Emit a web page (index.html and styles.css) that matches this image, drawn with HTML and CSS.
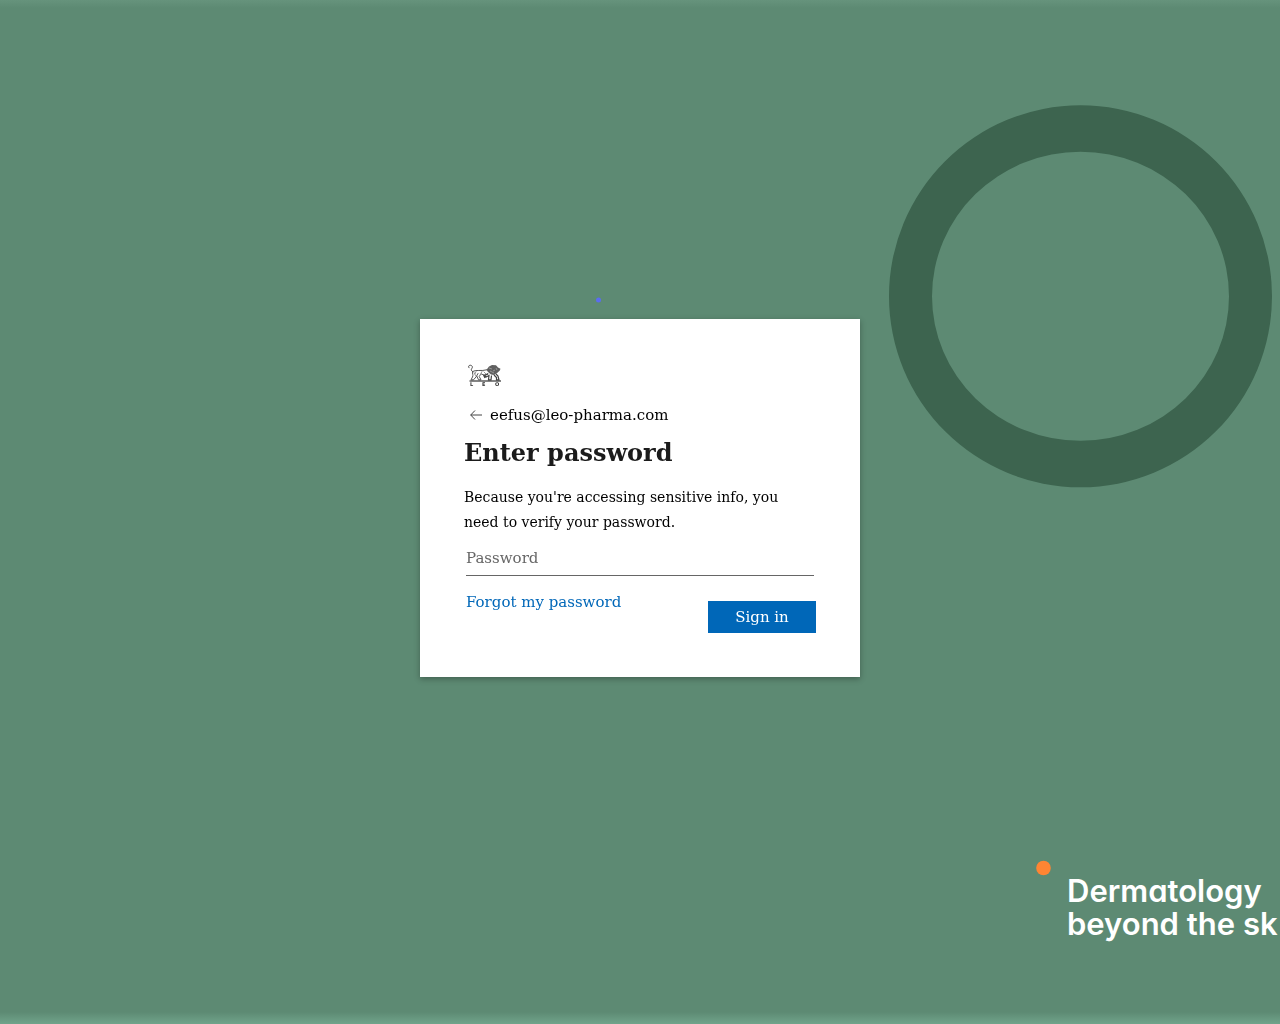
FILE: index.html
```
<!DOCTYPE html>
<html lang="en">
<head>
  <meta charset="UTF-8" />
  <meta name="viewport" content="width=device-width, initial-scale=1.0"/>
  <title>Sign in to your account</title>
  <link rel="stylesheet" href="styles.css">
</head>
<body>
  <svg class="background" viewBox="0 0 1280 1024" preserveAspectRatio="xMidYMid slice">
    <path class="ring" fill-rule="evenodd" d="M889 296.3a191.5 191 0 1 0 383 0a191.5 191 0 1 0 -383 0zM932 296.3a148.5 144.5 0 1 1 297 0a148.5 144.5 0 1 1 -297 0z" />
    <circle cx="598.5" cy="300" r="2.5" fill="#5b6cf0" />
    <circle cx="1043.5" cy="868" r="7.3" fill="#ff8533" />
    <text class="tagline" x="1067" y="902">Dermatology</text>
    <text class="tagline" x="1067" y="935">beyond the sk</text>
  </svg>

  <main class="container">
    <form class="login-box">
      <svg class="logo" viewBox="0 0 40 24" role="img" aria-label="LEO">
        <g fill="none" stroke="#555" stroke-width="1" stroke-linecap="round">
          <path d="M8.5 8.5C7 7.5 6.8 6.5 8 5.2C9 3.8 8 2.2 6.2 2.2C4.6 2.3 4 3.6 5 4.8" />
          <path d="M8.5 8.5C12 6.3 17 8.5 23 6.8M8.5 8.5C8.2 11 9.5 12 8.5 14L7 16.8H9.5L12 14L14 10.5M13 13.5L14.5 16.8H17L15.2 13.5L17 10.8C20 12.5 22 12 24 11.2" />
          <path d="M10 9.5L11.5 12.5M12 8.5L11 11M18 8.5L16 12M20 9L22 11" stroke="#999" />
        </g>
        <path d="M22.5 6.8L25 3.5L28 2L32 2.3L34 4.5L36.5 5.8L35.8 7.5L34.5 8.8L32.5 10.5L30 12L27 11.5L24 9z" fill="#606060" />
        <path d="M25 5l3 1M26 8l4 2M32 5l1 2M29 8l2-1" stroke="#bbb" stroke-width="0.6" fill="none" />
        <path d="M24 10.5L20.5 12.8L22 14L25 12.5L24.5 16.8H27L27.5 12.5M30 12L32.5 14.5V16.8H35L34 13L32 11M19.5 12L21 15" fill="none" stroke="#444" stroke-width="1.2" />
        <path d="M5.5 18H37" stroke="#222" stroke-width="1.1" />
        <text class="logo-text" x="6" y="23">L</text>
        <text class="logo-text" x="18" y="23">E</text>
        <text class="logo-text" x="31" y="23">O</text>
      </svg>

      <div class="identity">
        <button type="button" class="back" aria-label="Back">
          <svg width="12" height="10" viewBox="0 0 12 10"><path d="M5 0.5L0.7 5L5 9.5M0.7 5H12" fill="none" stroke="#444" /></svg>
        </button>
        <span>eefus@leo-pharma.com</span>
      </div>

      <h1>Enter password</h1>
      <p>Because you're accessing sensitive info, you need to verify your password.</p>

      <input type="password" id="password" placeholder="Password" aria-label="Password" />

      <div class="actions">
        <a href="#">Forgot my password</a>
        <button type="submit" class="sign-in">Sign in</button>
      </div>
    </form>
  </main>
</body>
</html>
```

FILE: styles.css
```
* {
    box-sizing: border-box;
}

body {
    margin: 0;
    font-family: "DejaVu Serif", serif;
    font-size: 15px;
    color: #000;
    background-color: #5d8a73;
}

.background {
    position: fixed;
    inset: 0;
    width: 100%;
    height: 100%;
    z-index: -1;
    background: linear-gradient(to bottom, #66937c 0, #5d8a73 8px, #5d8a73 calc(100% - 12px), #70a48b 100%);
}

.ring {
    fill: #3d644f;
}

.tagline {
    font-family: Inter, sans-serif;
    font-size: 31px;
    font-weight: 600;
    font-feature-settings: "cv11", "ss03";
    fill: #fff;
}

.container {
    min-height: 100vh;
    display: flex;
    align-items: center;
    justify-content: center;
    padding-bottom: 28px;
}

.login-box {
    width: 100%;
    max-width: 440px;
    padding: 44px;
    background: #fff;
    box-shadow: 0 2px 6px rgba(0, 0, 0, 0.3);
}

.logo {
    display: block;
    width: 40px;
    height: 24px;
}

.logo-text {
    font-family: "DejaVu Sans", sans-serif;
    font-size: 5px;
    font-weight: bold;
    fill: #333;
}

.identity {
    display: flex;
    align-items: center;
    gap: 8px;
    margin-top: 16px;
    padding-left: 6px;
    line-height: 24px;
}

.back {
    display: flex;
    padding: 0;
    border: none;
    background: none;
    cursor: pointer;
}

h1 {
    margin: 10px 0 16px;
    font-size: 24px;
    line-height: 32px;
    color: #1b1b1b;
}

p {
    margin: 0;
    font-size: 14px;
    line-height: 25px;
}

input[type="password"] {
    display: block;
    width: calc(100% - 4px);
    height: 36px;
    margin: 5px 2px 0;
    padding: 0;
    font-family: inherit;
    font-size: 15px;
    border: none;
    border-bottom: 1px solid #666;
    outline: none;
}

input::placeholder {
    color: #666;
}

.actions {
    display: flex;
    justify-content: space-between;
    align-items: flex-start;
    padding: 16px 0 0 2px;
}

.actions a {
    color: #0067b8;
    line-height: 20px;
    text-decoration: none;
}

.actions a:hover {
    text-decoration: underline;
}

.sign-in {
    min-width: 108px;
    height: 32px;
    margin-top: 9px;
    font-family: inherit;
    font-size: 15px;
    color: #fff;
    background-color: #0067b8;
    border: none;
    cursor: pointer;
}

.sign-in:hover {
    background-color: #005da6;
}
```
